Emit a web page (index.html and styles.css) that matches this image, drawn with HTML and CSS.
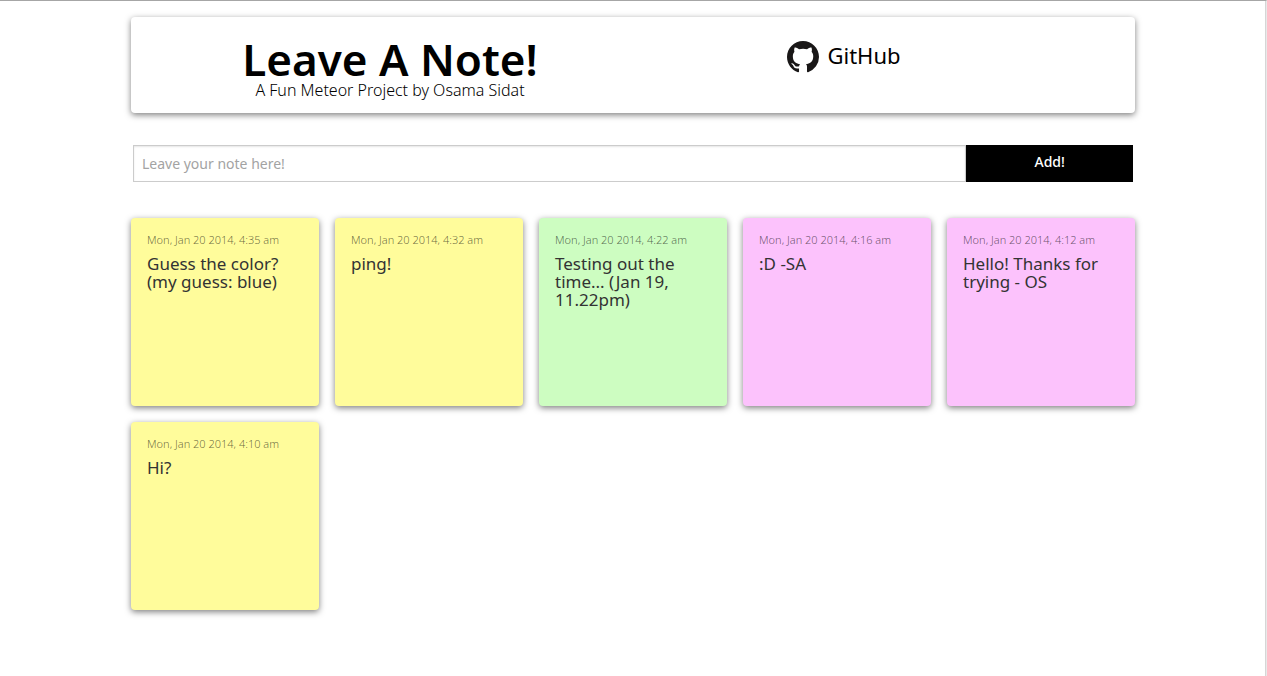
FILE: index.html
```html
<!DOCTYPE html>
<html lang="en">
<head>
<meta charset="utf-8">
<title>Leave A Note!</title>
<link rel="stylesheet" href="styles.css">
</head>
<body>
<main class="page">
  <header class="banner">
    <div class="intro">
      <h1 class="title">Leave A Note!</h1>
      <p class="tagline">A Fun Meteor Project by Osama Sidat</p>
    </div>
    <a class="github" href="#">
      <svg class="github-mark" viewBox="0 0 16 16" aria-hidden="true"><path fill="#191717" d="M8 0C3.58 0 0 3.58 0 8c0 3.54 2.29 6.53 5.47 7.59.4.07.55-.17.55-.38 0-.19-.01-.82-.01-1.49-2.01.37-2.53-.49-2.69-.94-.09-.23-.48-.94-.82-1.13-.28-.15-.68-.52-.01-.53.63-.01 1.08.58 1.23.82.72 1.21 1.87.87 2.33.66.07-.52.28-.87.51-1.07-1.78-.2-3.64-.89-3.64-3.95 0-.87.31-1.59.82-2.15-.08-.2-.36-1.02.08-2.12 0 0 .67-.21 2.2.82.64-.18 1.32-.27 2-.27s1.36.09 2 .27c1.53-1.04 2.2-.82 2.2-.82.44 1.1.16 1.92.08 2.12.51.56.82 1.27.82 2.15 0 3.07-1.87 3.75-3.65 3.95.29.25.54.73.54 1.48 0 1.07-.01 1.93-.01 2.2 0 .21.15.46.55.38A8.01 8.01 0 0 0 16 8c0-4.42-3.58-8-8-8z"/></svg>
      <span class="github-label">GitHub</span>
    </a>
  </header>
  <form class="composer">
    <input class="note-input" type="text" aria-label="Your note" placeholder="Leave your note here!">
    <button class="add-button" type="button">Add!</button>
  </form>
  <section class="notes" aria-label="Notes">
    <article class="note yellow"><time class="date">Mon, Jan 20 2014, 4:35 am</time><p class="text">Guess the color? (my guess: blue)</p></article>
    <article class="note yellow"><time class="date">Mon, Jan 20 2014, 4:32 am</time><p class="text">ping!</p></article>
    <article class="note green"><time class="date">Mon, Jan 20 2014, 4:22 am</time><p class="text">Testing out the time... (Jan 19, 11.22pm)</p></article>
    <article class="note pink"><time class="date">Mon, Jan 20 2014, 4:16 am</time><p class="text">:D -SA</p></article>
    <article class="note pink"><time class="date">Mon, Jan 20 2014, 4:12 am</time><p class="text">Hello! Thanks for trying - OS</p></article>
    <article class="note yellow"><time class="date">Mon, Jan 20 2014, 4:10 am</time><p class="text">Hi?</p></article>
  </section>
</main>
</body>
</html>
```
FILE: styles.css
```css
* { box-sizing: border-box; }

body {
  margin: 0;
  min-height: 100vh;
  border-top: 1px solid #a6a6a6;
  border-right: 1px solid #e9e9e9;
  box-shadow: inset -1px 0 #d6d6d6;
  background: #fff;
  color: #000;
  font-family: "Noto Sans", "Open Sans", sans-serif;
}

.page {
  max-width: 1004px;
  margin: 0 auto;
  padding: 16px 0;
}

.banner {
  display: grid;
  grid-template-columns: 1fr 1fr;
  align-items: start;
  padding: 20px 64px 14px 32px;
  border-radius: 4px;
  box-shadow: 0 2px 6px rgba(0, 0, 0, 0.5);
  text-align: center;
}

.title {
  margin: 0;
  font-size: 44px;
  font-weight: 600;
  line-height: 44px;
}

.tagline {
  margin: 0;
  font-size: 16px;
  font-weight: 300;
  line-height: 18px;
}

.github {
  display: flex;
  justify-content: center;
  align-items: center;
  gap: 8px;
  padding-top: 4px;
  color: #000;
  font-size: 22px;
  line-height: 28px;
  text-decoration: none;
}

.github-label { padding-bottom: 4px; }

.github-mark {
  width: 32px;
  height: 32px;
}

.composer {
  display: grid;
  grid-template-columns: 5fr 1fr;
  margin: 32px 2px 36px;
}

.note-input {
  height: 37px;
  min-width: 0;
  padding: 0 8px;
  border: 1px solid #ccc;
  border-radius: 0;
  box-shadow: inset 0 1px 2px rgba(0, 0, 0, 0.1);
  background: #fff;
  font: 14px "Noto Sans", sans-serif;
}

.note-input::placeholder { color: #a3a3a3; }

.add-button {
  padding: 0 0 4px;
  border: 0;
  background: #000;
  color: #fff;
  font: 500 14px "Noto Sans", sans-serif;
}

.notes {
  display: grid;
  grid-template-columns: repeat(5, 1fr);
  gap: 16px;
}

.note {
  aspect-ratio: 1;
  padding: 16px;
  border-radius: 4px;
  box-shadow: 0 2px 6px rgba(0, 0, 0, 0.5);
}

.yellow { background: #fffc9b; }
.green { background: #cdfdc1; }
.pink { background: #fcc2fc; }

.date {
  display: block;
  color: rgba(0, 0, 0, 0.6);
  font-size: 11px;
  font-weight: 300;
  line-height: 12px;
}

.text {
  margin: 9px 0 0;
  color: #333;
  font-size: 17px;
  line-height: 18px;
}
```
